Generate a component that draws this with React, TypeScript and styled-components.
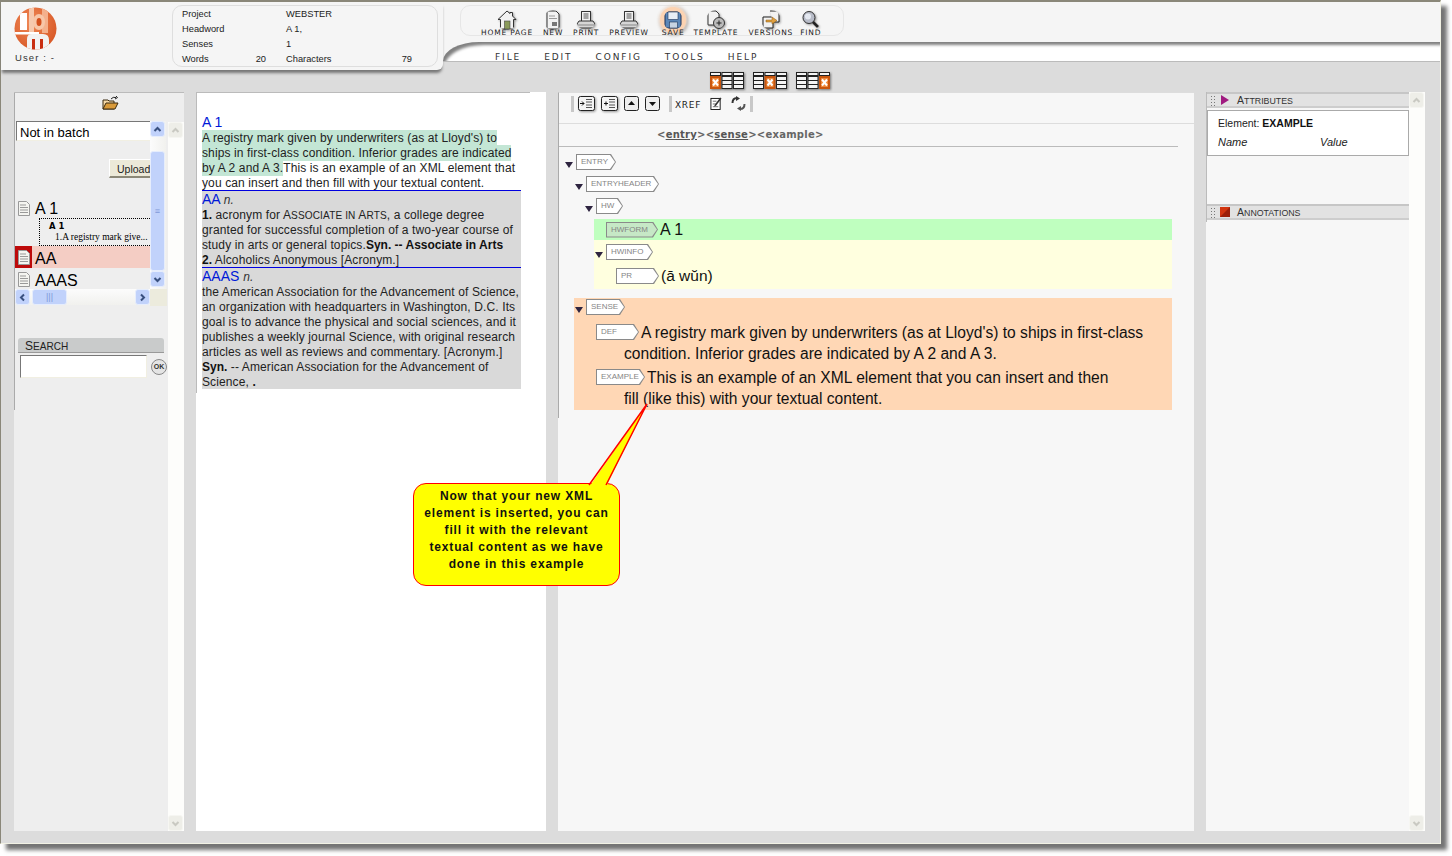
import React from 'react';
import styled, { createGlobalStyle } from 'styled-components';

const GlobalStyle = createGlobalStyle`
  html, body {
    margin: 0;
    height: 856px;
    overflow: hidden;
    background: #fff;
    font-family: "Liberation Sans", Arial, sans-serif;
    color: #000;
  }
  * { box-sizing: border-box; }
`;

const Window = styled.div`
  position: relative;
  width: 1441px;
  height: 844px;
  display: flex;
  flex-direction: column;
  background: #dcdcdc;
  border-top: 2px solid #8a8779;
  border-left: 1px solid #8a8779;
  border-right: 1px solid #f1f1e4;
  border-bottom: 1px solid #f1f1e4;
  box-shadow: 6px 6px 4px rgba(70, 70, 70, 0.75);
`;

const Header = styled.header`
  display: flex;
  height: 90px;
  flex: none;
`;

const HeaderLeft = styled.div`
  width: 442px;
  height: 68px;
  display: flex;
  background: #f5f5f5;
  border-bottom-right-radius: 6px;
  box-shadow: 0 4px 3px -1px #777;
  position: relative;
  z-index: 1;
`;

const Brand = styled.div`
  width: 171px;
  padding: 5px 0 0 13px;
  svg { display: block; }
`;

const UserLabel = styled.div`
  margin: 2px 0 0 1px;
  font-size: 9.5px;
  letter-spacing: 1.1px;
  color: #333;
`;

const InfoBox = styled.div`
  width: 266px;
  height: 62px;
  margin-top: 3px;
  padding: 0 0 0 9px;
  border: 1px solid #dedede;
  border-radius: 10px;
  display: grid;
  grid-template-columns: 60px 24px 20px 100px 26px;
  grid-auto-rows: 15px;
  align-items: center;
  font-size: 9.3px;
  color: #222;
`;

const InfoLabel = styled.span`
  grid-column: 1;
`;

const InfoValue = styled.span`
  grid-column: 4;
`;

const InfoNumber = styled.span`
  text-align: right;
`;

const HeaderRight = styled.div`
  flex: 1;
  display: flex;
  flex-direction: column;
  min-width: 0;
  background: linear-gradient(#f5f5f5 0, #f5f5f5 60px, #dcdcdc 60px);
`;

const ToolbarZone = styled.div`
  height: 40px;
  padding: 3px 0 0 17px;
`;

const ToolGroup = styled.div`
  width: 384px;
  height: 31px;
  padding: 4px 0 0 20px;
  display: flex;
  align-items: flex-start;
  gap: 10px;
  border: 1px solid #e6e6e6;
  border-radius: 10px;
`;

const ToolButton = styled.div<{ $glow?: boolean; $pull?: number }>`
  display: flex;
  flex-direction: column;
  align-items: center;
  margin: ${(p) => (p.$glow ? '0 -1px 0 3px' : `0 0 0 ${p.$pull || 0}px`)};
  svg {
    display: block;
    flex: none;
    width: 20px;
    height: 20px;
    margin-bottom: -1px;
    filter: drop-shadow(1px 1px 1px #999);
    border-radius: 50%;
    box-shadow: ${(p) => (p.$glow ? '0 0 0 3px #fcd3b2, 0 0 3px 4px #fde6d4' : 'none')};
    background: ${(p) => (p.$glow ? '#fcd3b2' : 'transparent')};
  }
`;

const ToolLabel = styled.span`
  position: relative;
  z-index: 1;
  font-family: "DejaVu Sans", sans-serif;
  font-size: 7.5px;
  letter-spacing: 0.8px;
  line-height: 8px;
  white-space: nowrap;
  color: #222;
`;

const MenuBar = styled.nav`
  height: 20px;
  padding: 11px 0 0 52px;
  display: flex;
  background: #fff;
  border-bottom: 1px solid #bbb;
  border-top-left-radius: 38px 20px;
  box-shadow: inset 3px 4px 3px -1px #808080;
  font-family: "DejaVu Sans", sans-serif;
  font-size: 9px;
  line-height: 9px;
  letter-spacing: 1.9px;
  color: #333;
  gap: 23px;
`;

const ViewSwitch = styled.div`
  padding: 10px 0 0 266px;
  display: flex;
  gap: 7px;
  svg {
    display: block;
    filter: drop-shadow(1px 1px 1px #777);
  }
`;

const Body = styled.main`
  flex: 1;
  min-height: 0;
  display: flex;
  gap: 12px;
  padding: 0 14px 12px 13px;
`;

const LeftPanel = styled.section`
  width: 170px;
  display: flex;
  background: #eee;
  border-top: 1px solid #bbb;
`;

const LeftMain = styled.div`
  width: 154px;
  height: 317px;
  border-left: 1px solid #aaa;
`;

const OuterScroll = styled.div<{ $top: number }>`
  width: 16px;
  margin-top: ${(p) => p.$top}px;
  display: flex;
  flex-direction: column;
  justify-content: space-between;
  background: #fdfdfb;
`;

const FolderRow = styled.div`
  height: 28px;
  padding: 3px 0 0 87px;
`;

const BatchBox = styled.div`
  width: 152px;
  display: grid;
  grid-template-columns: 135px 17px;
  grid-template-rows: 168px 17px;
`;

const BatchBody = styled.div`
  overflow: hidden;
`;

const BatchInput = styled.div`
  height: 20px;
  margin-left: 1px;
  padding: 3px 3px 0;
  background: #fff;
  border-top: 1px solid #777;
  border-left: 1px solid #777;
  border-bottom: 1px solid #f1efe2;
  font-size: 13px;
  line-height: 15px;
  white-space: nowrap;
`;

const UploadButton = styled.div`
  width: 41px;
  height: 19px;
  margin: 18px 0 20px 94px;
  padding: 3px 0 0 7px;
  background: #ece9d8;
  border-top: 1px solid #fff;
  border-left: 1px solid #fff;
  border-bottom: 2px solid #8b8877;
  font-size: 10.5px;
  line-height: 13px;
  color: #222;
`;

const Entry = styled.div<{ $active?: boolean; $height: number }>`
  height: ${(p) => p.$height}px;
  display: flex;
  align-items: center;
  background: ${(p) => (p.$active ? '#f4cdc4' : 'transparent')};
  font-size: 16px;
  white-space: nowrap;
`;

const EntryLabel = styled.span<{ $top?: number }>`
  padding-top: ${(p) => p.$top ?? 3}px;
`;

const EntryIcon = styled.span<{ $active?: boolean }>`
  width: 17px;
  height: 100%;
  margin-right: 3px;
  display: flex;
  align-items: center;
  justify-content: center;
  background: ${(p) => (p.$active ? '#bd0a0a' : 'transparent')};
`;

const EntryPreview = styled.div`
  height: 28px;
  margin-left: 24px;
  padding: 2px 0 0 9px;
  border-top: 1px dotted #000;
  border-left: 1px dotted #000;
  border-bottom: 1px dotted #000;
  white-space: nowrap;
  strong {
    display: block;
    font-family: "DejaVu Sans", sans-serif;
    font-size: 8.5px;
    line-height: 10px;
  }
  span {
    display: block;
    margin: 1px 0 0 6px;
    font-family: "Liberation Serif", serif;
    font-size: 9.5px;
    line-height: 11px;
  }
`;

const VScroll = styled.div`
  display: flex;
  flex-direction: column;
  width: 16px;
  background: linear-gradient(90deg, #fcfcfc, #f1f1ee);
`;

const HScroll = styled.div`
  display: flex;
  align-items: center;
  height: 16px;
  background: linear-gradient(#fcfcfc, #f1f1ee);
`;

const HScrollGap = styled.span`
  flex: 1;
`;

const Corner = styled.div`
  background: #ecebdd;
`;

const ScrollButton = styled.span<{ $pale?: boolean }>`
  flex: none;
  width: 15px;
  height: 16px;
  display: flex;
  align-items: center;
  justify-content: center;
  border: 1px solid ${(p) => (p.$pale ? '#f6f6f2' : '#e6edfc')};
  border-radius: 3px;
  background: ${(p) => (p.$pale ? '#eeeee8' : '#c1d2fb')};
  color: ${(p) => (p.$pale ? '#c9c9c2' : '#39507f')};
`;

const ScrollThumb = styled.span<{ $length: number; $flat?: boolean }>`
  flex: none;
  display: flex;
  align-items: center;
  justify-content: center;
  ${(p) =>
    p.$flat
      ? `width: ${p.$length}px; height: 16px; margin-left: 2px;`
      : `height: ${p.$length}px; width: 15px; margin-top: 14px;`}
  border: 1px solid #e6edfc;
  border-radius: 3px;
  background: #c1d2fb;
  color: #7f99d8;
  font-size: 9px;
`;

const Caps = styled.span`
  small {
    font-size: 0.84em;
  }
`;

const SearchHead = styled.div`
  width: 146px;
  height: 15px;
  margin: 32px 0 0 3px;
  padding: 1px 0 0 7px;
  background: #c9cbcb;
  border-bottom: 1px solid #999;
  border-radius: 3px 3px 0 0;
  font-size: 12px;
  line-height: 15px;
  color: #222;
`;

const SearchRow = styled.div`
  margin: 2px 0 0 5px;
  display: flex;
  align-items: center;
  gap: 4px;
`;

const SearchInput = styled.div`
  width: 127px;
  height: 23px;
  background: #fff;
  border-top: 1px solid #777;
  border-left: 1px solid #777;
  border-bottom: 1px solid #f1efe2;
  border-right: 1px solid #f1efe2;
`;

const OkButton = styled.span`
  width: 16px;
  height: 16px;
  display: flex;
  align-items: center;
  justify-content: center;
  border: 1px solid #888;
  border-radius: 50%;
  background: #e4e4e4;
  font-size: 7px;
  font-weight: bold;
  color: #333;
`;

const TextPanel = styled.section`
  width: 350px;
  background: #fff;
`;

const TextFrame = styled.div`
  width: 334px;
  height: 301px;
  padding: 22px 0 0 5px;
  border-top: 1px solid #bbb;
  border-left: 1px solid #bbb;
`;

const Article = styled.article<{ $shaded?: boolean; $ruled?: boolean; $height: number }>`
  width: 319px;
  height: ${(p) => p.$height}px;
  background: ${(p) => (p.$shaded ? '#d9d9d9' : 'transparent')};
  border-top: ${(p) => (p.$ruled ? '1px solid #0000e0' : 'none')};
  font-size: 12px;
  line-height: 15px;
  letter-spacing: 0.12px;
  white-space: nowrap;
  color: #222;
  mark {
    padding: 1px 0;
    background: #c3e6d5;
    color: inherit;
  }
  b {
    color: #111;
    letter-spacing: 0;
  }
`;

const Headword = styled.div<{ $large?: boolean }>`
  height: ${(p) => (p.$large ? 17 : 16)}px;
  font-size: 14px;
  line-height: ${(p) => (p.$large ? 16 : 15)}px;
  letter-spacing: 0;
  color: #0018d8;
  i {
    font-size: 12px;
    color: #333;
  }
`;

const EditorPanel = styled.section`
  width: 636px;
  background: #f7f7f7;
`;

const EditorFrame = styled.div`
  height: 326px;
  border-left: 1px solid #aaa;
  border-top: 1px solid #ddd;
`;

const EditorToolbar = styled.div`
  height: 31px;
  padding: 3px 0 0 12px;
  display: flex;
  align-items: flex-start;
  gap: 6px;
  border-bottom: 1px solid #ddd;
  svg {
    display: block;
    flex: none;
  }
`;

const ToolSeparator = styled.span<{ $left?: number; $right?: number }>`
  width: 3px;
  height: 16px;
  margin-left: ${(p) => p.$left || 0}px;
  margin-right: ${(p) => p.$right || 0}px;
  background: #c8c8c8;
`;

const XrefLabel = styled.span`
  margin: 4px 3px 0 0;
  font-family: "DejaVu Sans", sans-serif;
  font-size: 9px;
  letter-spacing: 0.7px;
  color: #222;
`;

const PathBar = styled.div`
  width: 619px;
  height: 23px;
  padding: 4px 0 0 98px;
  border-bottom: 1px solid #bbb;
  font-family: "DejaVu Sans", sans-serif;
  font-size: 10px;
  font-weight: bold;
  letter-spacing: 0.25px;
  line-height: 13px;
  color: #666;
  u { color: #555; }
`;

const Tree = styled.div`
  padding-top: 7px;
`;

const TreeRow = styled.div<{ $depth?: number; $height?: number; $gap?: number }>`
  display: flex;
  align-items: flex-end;
  gap: 3px;
  height: ${(p) => p.$height || 16}px;
  margin-bottom: ${(p) => p.$gap || 0}px;
  padding-left: ${(p) => p.$depth || 0}px;
`;

const Toggle = styled.span`
  width: 0;
  height: 0;
  margin-bottom: 2px;
  border-left: 4px solid transparent;
  border-right: 4px solid transparent;
  border-top: 6px solid #2e2440;
`;

const Tag = styled.span<{ $width: number; $muted?: boolean }>`
  position: relative;
  isolation: isolate;
  flex: none;
  display: inline-block;
  width: ${(p) => p.$width}px;
  height: 16px;
  padding: 2px 0 0 5px;
  margin-right: 2px;
  background: #8a8a8a;
  clip-path: polygon(0 0, calc(100% - 5px) 0, 100% 50%, calc(100% - 5px) 100%, 0 100%);
  text-indent: 0;
  vertical-align: 4px;
  font-size: 8px;
  line-height: 11px;
  letter-spacing: 0;
  color: #858585;
  &::before {
    content: '';
    position: absolute;
    inset: 1px;
    z-index: -1;
    background: ${(p) => (p.$muted ? '#c6e8c6' : '#fff')};
    clip-path: polygon(0 0, calc(100% - 5px) 0, 100% 50%, calc(100% - 5px) 100%, 0 100%);
  }
`;

const Band = styled.div<{ $color: string; $left: number; $height: number; $gap?: number }>`
  width: ${(p) => 613 - p.$left}px;
  height: ${(p) => p.$height}px;
  margin-left: ${(p) => p.$left}px;
  margin-bottom: ${(p) => p.$gap || 0}px;
  background: ${(p) => p.$color};
`;

const FormRow = styled.div`
  height: 100%;
  padding-left: 12px;
  display: flex;
  align-items: center;
  font-size: 16px;
  color: #111;
`;

const PronRow = styled.div`
  margin: 7px 0 0 22px;
  display: flex;
  align-items: center;
  font-size: 15.5px;
  line-height: 18px;
  color: #111;
`;

const SenseText = styled.p<{ $top: number }>`
  margin: ${(p) => p.$top}px 0 0 50px;
  text-indent: -28px;
  font-size: 15.6px;
  line-height: 21px;
  white-space: nowrap;
  color: #111;
`;

const RightPanel = styled.aside`
  width: 219px;
  display: flex;
  background: #f7f7f7;
`;

const RightMain = styled.div`
  width: 204px;
  height: 130px;
  border-left: 1px solid #bbb;
`;

const DockBar = styled.div<{ $top?: number }>`
  width: 202px;
  height: 16px;
  margin-top: ${(p) => p.$top || 0}px;
  padding-left: 3px;
  display: flex;
  align-items: center;
  gap: 4px;
  background: #e2e2e2;
  border-top: 2px solid #c6c6c6;
  border-bottom: 2px solid #cdcdcd;
  font-size: 10.5px;
  color: #333;
  svg { flex: none; }
`;

const DockTitle = styled.span`
  margin-left: 3px;
`;

const Grip = styled.span`
  width: 5px;
  height: 11px;
  margin-right: 1px;
  background-image: radial-gradient(#777 0.7px, transparent 0.8px);
  background-size: 3px 3px;
`;

const DockBody = styled.div`
  width: 202px;
  height: 46px;
  margin-top: 2px;
  padding: 5px 0 0 10px;
  background: #fff;
  border: 1px solid #aaa;
  font-size: 10.5px;
  line-height: 14px;
  color: #222;
  b { color: #111; }
`;

const AttrHead = styled.div`
  margin-top: 5px;
  display: grid;
  grid-template-columns: 102px 1fr;
  font-size: 11px;
  font-style: italic;
`;

const Callout = styled.div`
  position: absolute;
  left: 412px;
  top: 481px;
  width: 207px;
  height: 103px;
  padding-top: 4px;
  background: #ff0;
  border: 1.5px solid #f00;
  border-radius: 13px;
  text-align: center;
  font-size: 12px;
  font-weight: bold;
  line-height: 17px;
  letter-spacing: 0.85px;
  color: #111;
`;

const CalloutTail = styled.svg`
  position: absolute;
  left: 171px;
  top: -83px;
  display: block;
`;

const Chevron = ({ dir }: { dir: 'up' | 'down' | 'left' | 'right' }) => {
  const turn = { up: 0, right: 90, down: 180, left: 270 }[dir];
  return (
    <svg width="9" height="9" viewBox="0 0 9 9">
      <polyline
        points="1.5,6 4.5,3 7.5,6"
        fill="none"
        stroke="currentColor"
        strokeWidth="2"
        transform={`rotate(${turn} 4.5 4.5)`}
      />
    </svg>
  );
};

const Logo = () => (
  <svg width="43" height="43" viewBox="0 0 43 43">
    <defs>
      <radialGradient id="logoFill" cx="0.4" cy="0.35" r="0.8">
        <stop offset="0" stopColor="#f08a58" />
        <stop offset="1" stopColor="#d4501e" />
      </radialGradient>
      <clipPath id="logoClip">
        <circle cx="21.5" cy="21.5" r="21" />
      </clipPath>
    </defs>
    <circle cx="21.5" cy="21.5" r="21" fill="url(#logoFill)" />
    <g clipPath="url(#logoClip)">
      <rect x="6" y="6" width="7" height="17" fill="#fff" />
      <rect x="0" y="25" width="25" height="2.5" fill="#fff" />
      <rect x="15" y="0" width="5" height="25" fill="#f6c9ae" />
      <rect x="28" y="0" width="6" height="26" fill="#f4b08c" />
      <ellipse cx="25" cy="15" rx="6" ry="8" fill="#f7c6a8" />
      <ellipse cx="25" cy="15" rx="2.5" ry="4" fill="#d4501e" />
      <path d="M13 44V32q0-5 5-5h11q6 0 6 6v11z" fill="#f2f2f2" />
      <rect x="18" y="32" width="3" height="12" fill="#c92d10" />
      <rect x="26" y="32" width="3" height="12" fill="#c92d10" />
    </g>
  </svg>
);

const toolIcons: Record<string, React.ReactNode> = {
  home: (
    <>
      <path d="M10 1 1 9.5h2.5V19h13V9.5H19L15.5 6V2.5h-2.5V3.5z" fill="#f2f2f2" stroke="#333" />
      <rect x="7.5" y="11" width="5.5" height="8" fill="#8a9a5a" stroke="#444" strokeWidth="0.6" />
    </>
  ),
  new: (
    <>
      <path d="M4 1h9l3 3v15H4z" fill="#f2f2f2" stroke="#333" />
      <path d="M6 6h6M6 8.5h8" stroke="#999" />
      <rect x="9" y="12" width="5" height="4" fill="#777" />
    </>
  ),
  print: (
    <>
      <rect x="5.5" y="1.5" width="9" height="10" fill="#f2f2f2" stroke="#333" />
      <path d="M7.5 4h5M7.5 6h5M7.5 8h5" stroke="#555" />
      <path d="M3 11h14l2 3v4H1v-4z" fill="#d6d6d6" stroke="#333" />
      <path d="M2 15h16" stroke="#888" />
    </>
  ),
  save: (
    <>
      <path d="M2 2h16v16H4l-2-2z" fill="#5c87b8" stroke="#1c3358" />
      <rect x="5" y="2" width="10" height="7.5" fill="#e8eef6" stroke="#1c3358" strokeWidth="0.6" />
      <rect x="6.5" y="12" width="8" height="6" fill="#c7d3e2" stroke="#1c3358" strokeWidth="0.6" />
    </>
  ),
  template: (
    <>
      <path d="M2 1h8l3 3v11H2z" fill="#f2f2f2" stroke="#333" />
      <circle cx="13" cy="13" r="5.5" fill="#bbb" stroke="#333" />
      <path d="M10.5 13h5M13 10.5v5" stroke="#222" />
    </>
  ),
  versions: (
    <>
      <path d="M2 7h10v11H2z" fill="#f2f2f2" stroke="#222" />
      <path d="M9 1h9v11h-6" fill="#f2f2f2" stroke="#222" />
      <path d="M5 10h6V7l5 3.5-5 3.5v-2H5z" fill="#e0a040" stroke="#8a5a10" strokeWidth="0.5" />
    </>
  ),
  find: (
    <>
      <circle cx="8" cy="7.5" r="6" fill="#b8bcc8" stroke="#333" />
      <circle cx="7" cy="6.5" r="3" fill="#e4e8f0" />
      <path d="m12 12 6.5 6.5" stroke="#222" strokeWidth="2.6" />
    </>
  )
};

const tools = [
  { icon: 'home', label: 'HOME PAGE' },
  { icon: 'new', label: 'NEW' },
  { icon: 'print', label: 'PRINT' },
  { icon: 'print', label: 'PREVIEW' },
  { icon: 'save', label: 'SAVE', glow: true },
  { icon: 'template', label: 'TEMPLATE' },
  { icon: 'versions', label: 'VERSIONS' },
  { icon: 'find', label: 'FIND', pull: -3 }
];

const ViewIcon = ({ active }: { active: number }) => (
  <svg width="36" height="17" viewBox="0 0 36 17">
    {[0, 1, 2].map((col) => (
      <React.Fragment key={col}>
        <rect x={1 + col * 11.5} y="0" width="11" height="4" fill="#222" />
        <rect x={2 + col * 11.5} y="1" width="9" height="2" fill="#f4f4f4" />
        {col === active ? (
          <g>
            <rect x={1 + col * 11.5} y="4" width="11" height="13" fill="#c9560e" />
            <rect x={3 + col * 11.5} y="6" width="7" height="9" fill="#ef8a3c" />
            <path d={`M${4 + col * 11.5} 7.5l5 6m0-6l-5 6`} stroke="#fff" strokeWidth="2" />
          </g>
        ) : (
          <g>
            <rect x={1 + col * 11.5} y="4" width="11" height="13" fill="#222" />
            {[5, 9, 13].map((y) => (
              <rect key={y} x={2 + col * 11.5} y={y} width="9" height="3" fill="#f4f4f4" />
            ))}
          </g>
        )}
      </React.Fragment>
    ))}
  </svg>
);

const FolderIcon = () => (
  <svg width="17" height="14" viewBox="0 0 17 14">
    <path d="M1 4h5l1 1h5v8H1z" fill="#f5d9a8" stroke="#3a2a10" />
    <path d="M1 13 4 7h12l-3 6z" fill="#d99a3a" stroke="#3a2a10" />
    <path d="M9 3q2-2.5 5-1.5M14 0l1.5 1.6L13 3" fill="none" stroke="#222" />
  </svg>
);

const PageIcon = () => (
  <svg width="12" height="15" viewBox="0 0 12 15">
    <path d="M.5.5h8l3 3v11H.5z" fill="#f4f4f0" stroke="#999" />
    <path d="M2 4h6M2 6.5h8M2 9h8M2 11.5h8" stroke="#999" />
  </svg>
);

const IndentIcon = ({ flip }: { flip?: boolean }) => (
  <svg width="17" height="15" viewBox="0 0 17 15" style={{ filter: 'drop-shadow(1px 1px 1px #999)' }}>
    <rect x="0.5" y="0.5" width="16" height="14" rx="2" fill="#f4f4f4" stroke="#222" />
    <path d="M8 3.5h6M8 6h6M8 9h6M8 11.5h6" stroke="#555" />
    <path d={flip ? 'M3 7.5h4M5 5.5v4' : 'M2 7.5h4m-2-2 2 2-2 2'} stroke="#111" fill="none" />
  </svg>
);

const MoveIcon = ({ down }: { down?: boolean }) => (
  <svg width="15" height="15" viewBox="0 0 15 15">
    <rect x="0.5" y="0.5" width="14" height="14" rx="2" fill="#eee" stroke="#222" />
    <path d={down ? 'M4 6h7l-3.5 4z' : 'M4 9h7l-3.5-4z'} fill="#111" />
  </svg>
);

const App = () => (
  <>
    <GlobalStyle />
    <Window>
      <Header>
        <HeaderLeft>
          <Brand>
            <Logo />
            <UserLabel>User : -</UserLabel>
          </Brand>
          <InfoBox>
            <InfoLabel>Project</InfoLabel>
            <InfoValue>WEBSTER</InfoValue>
            <InfoLabel>Headword</InfoLabel>
            <InfoValue>A 1,</InfoValue>
            <InfoLabel>Senses</InfoLabel>
            <InfoValue>1</InfoValue>
            <InfoLabel>Words</InfoLabel>
            <InfoNumber>20</InfoNumber>
            <InfoValue>Characters</InfoValue>
            <InfoNumber>79</InfoNumber>
          </InfoBox>
        </HeaderLeft>
        <HeaderRight>
          <ToolbarZone>
            <ToolGroup>
              {tools.map((tool) => (
                <ToolButton key={tool.label} $glow={tool.glow} $pull={tool.pull}>
                  <svg viewBox="0 0 20 20">{toolIcons[tool.icon]}</svg>
                  <ToolLabel>{tool.label}</ToolLabel>
                </ToolButton>
              ))}
            </ToolGroup>
          </ToolbarZone>
          <MenuBar>
            <span>FILE</span>
            <span>EDIT</span>
            <span>CONFIG</span>
            <span>TOOLS</span>
            <span>HELP</span>
          </MenuBar>
          <ViewSwitch>
            <ViewIcon active={0} />
            <ViewIcon active={1} />
            <ViewIcon active={2} />
          </ViewSwitch>
        </HeaderRight>
      </Header>

      <Body>
        <LeftPanel>
          <LeftMain>
            <FolderRow>
              <FolderIcon />
            </FolderRow>
            <BatchBox>
              <BatchBody>
                <BatchInput>Not in batch</BatchInput>
                <UploadButton>Upload</UploadButton>
                <Entry $height={20}>
                  <EntryIcon>
                    <PageIcon />
                  </EntryIcon>
                  <EntryLabel $top={1}>A 1</EntryLabel>
                </Entry>
                <EntryPreview>
                  <strong>A 1</strong>
                  <span>1.A registry mark give...</span>
                </EntryPreview>
                <Entry $active $height={22}>
                  <EntryIcon $active>
                    <PageIcon />
                  </EntryIcon>
                  <EntryLabel>AA</EntryLabel>
                </Entry>
                <Entry $height={22}>
                  <EntryIcon>
                    <PageIcon />
                  </EntryIcon>
                  <EntryLabel>AAAS</EntryLabel>
                </Entry>
              </BatchBody>
              <VScroll>
                <ScrollButton>
                  <Chevron dir="up" />
                </ScrollButton>
                <ScrollThumb $length={120}>≡</ScrollThumb>
                <ScrollButton>
                  <Chevron dir="down" />
                </ScrollButton>
              </VScroll>
              <HScroll>
                <ScrollButton>
                  <Chevron dir="left" />
                </ScrollButton>
                <ScrollThumb $length={35} $flat>
                  |||
                </ScrollThumb>
                <HScrollGap />
                <ScrollButton>
                  <Chevron dir="right" />
                </ScrollButton>
              </HScroll>
              <Corner />
            </BatchBox>
            <SearchHead>
              <Caps>
                S<small>EARCH</small>
              </Caps>
            </SearchHead>
            <SearchRow>
              <SearchInput />
              <OkButton>OK</OkButton>
            </SearchRow>
          </LeftMain>
          <OuterScroll $top={29}>
            <ScrollButton $pale>
              <Chevron dir="up" />
            </ScrollButton>
            <ScrollButton $pale>
              <Chevron dir="down" />
            </ScrollButton>
          </OuterScroll>
        </LeftPanel>

        <TextPanel>
          <TextFrame>
            <Article $height={75}>
              <Headword>A 1</Headword>
              <mark>
                A registry mark given by underwriters (as at Lloyd's) to
                <br />
                ships in first-class condition. Inferior grades are indicated
                <br />
                by A 2 and A 3.
              </mark>
              This is an example of an XML element that
              <br />
              you can insert and then fill with your textual content.
            </Article>
            <Article $shaded $ruled $height={77}>
              <Headword $large>
                AA <i>n.</i>
              </Headword>
              <b>1.</b> acronym for{' '}
              <Caps>
                A<small>SSOCIATE IN</small> A<small>RTS</small>
              </Caps>
              , a college degree
              <br />
              granted for successful completion of a two-year course of
              <br />
              study in arts or general topics.<b>Syn. -- Associate in Arts</b>
              <br />
              <b>2.</b> Alcoholics Anonymous [Acronym.]
            </Article>
            <Article $shaded $ruled $height={122}>
              <Headword $large>
                AAAS <i>n.</i>
              </Headword>
              the American Association for the Advancement of Science,
              <br />
              an organization with headquarters in Washington, D.C. Its
              <br />
              goal is to advance the physical and social sciences, and it
              <br />
              publishes a weekly journal Science, with original research
              <br />
              articles as well as reviews and commentary. [Acronym.]
              <br />
              <b>Syn.</b> -- American Association for the Advancement of
              <br />
              Science, <b>.</b>
            </Article>
          </TextFrame>
        </TextPanel>

        <EditorPanel>
          <EditorFrame>
            <EditorToolbar>
              <ToolSeparator $right={-2} />
              <IndentIcon />
              <IndentIcon flip />
              <MoveIcon />
              <MoveIcon down />
              <ToolSeparator $left={3} $right={-3} />
              <XrefLabel>XREF</XrefLabel>
              <svg width="12" height="15" viewBox="0 0 13 15">
                <rect x="1" y="2" width="10" height="12" fill="#fff" stroke="#111" />
                <path d="M3 5h4M3 8h4M3 11h6" stroke="#666" />
                <path d="m5 9 6-8 1.5 1-6 8-2 1z" fill="#333" />
              </svg>
              <svg width="15" height="15" viewBox="0 0 15 15" style={{ marginLeft: 3 }}>
                <path d="M1.5 7Q1.5 2 6 2" fill="none" stroke="#333" strokeWidth="2" />
                <path d="M5 0l4 2.5L5 5z" fill="#333" />
                <path d="M13.5 8q0 5-4.5 5" fill="none" stroke="#555" strokeWidth="2" />
                <path d="M10 15l-4-2.5L10 10z" fill="#555" />
              </svg>
              <ToolSeparator $left={-2} />
            </EditorToolbar>
            <PathBar>
              &lt;<u>entry</u>&gt;&lt;<u>sense</u>&gt;&lt;example&gt;
            </PathBar>
            <Tree>
              <TreeRow $depth={6} $gap={6}>
                <Toggle />
                <Tag $width={40}>ENTRY</Tag>
              </TreeRow>
              <TreeRow $depth={16} $gap={6}>
                <Toggle />
                <Tag $width={73}>ENTRYHEADER</Tag>
              </TreeRow>
              <TreeRow $depth={26} $gap={5}>
                <Toggle />
                <Tag $width={27}>HW</Tag>
              </TreeRow>
              <Band $color="#bfffbf" $left={35} $height={21}>
                <FormRow>
                  <Tag $width={52} $muted>
                    HWFORM
                  </Tag>
                  A 1
                </FormRow>
              </Band>
              <Band $color="#ffffdf" $left={35} $height={49} $gap={9}>
                <TreeRow $depth={1} $height={20}>
                  <Toggle />
                  <Tag $width={47}>HWINFO</Tag>
                </TreeRow>
                <PronRow>
                  <Tag $width={43}>PR</Tag>
                  (ā wŭn)
                </PronRow>
              </Band>
              <Band $color="#ffd7b5" $left={15} $height={112}>
                <TreeRow $depth={1} $height={17}>
                  <Toggle />
                  <Tag $width={39}>SENSE</Tag>
                </TreeRow>
                <SenseText $top={7}>
                  <Tag $width={43}>DEF</Tag>A registry mark given by underwriters (as at Lloyd's)
                  to ships in first-class
                  <br />
                  condition. Inferior grades are indicated by A 2 and A 3.
                </SenseText>
                <SenseText $top={3}>
                  <Tag $width={49}>EXAMPLE</Tag>This is an example of an XML element that you can
                  insert and then
                  <br />
                  fill (like this) with your textual content.
                </SenseText>
              </Band>
            </Tree>
          </EditorFrame>
        </EditorPanel>

        <RightPanel>
          <RightMain>
            <DockBar>
              <Grip />
              <svg width="10" height="10" viewBox="0 0 10 10">
                <path d="M1 0v10l8-5z" fill="#a01a80" />
              </svg>
              <DockTitle>
                <Caps>
                  A<small>TTRIBUTES</small>
                </Caps>
              </DockTitle>
            </DockBar>
            <DockBody>
              Element: <b>EXAMPLE</b>
              <AttrHead>
                <span>Name</span>
                <span>Value</span>
              </AttrHead>
            </DockBody>
            <DockBar $top={48}>
              <Grip />
              <svg width="10" height="10" viewBox="0 0 10 10">
                <rect width="10" height="10" fill="#d2350f" />
                <path d="M0 10 10 0v10z" fill="#9c1f08" />
              </svg>
              <DockTitle>
                <Caps>
                  A<small>NNOTATIONS</small>
                </Caps>
              </DockTitle>
            </DockBar>
          </RightMain>
          <OuterScroll $top={0}>
            <ScrollButton $pale>
              <Chevron dir="up" />
            </ScrollButton>
            <ScrollButton $pale>
              <Chevron dir="down" />
            </ScrollButton>
          </OuterScroll>
        </RightPanel>
      </Body>

      <Callout>
        <CalloutTail width="70" height="88" viewBox="0 0 70 88">
          <polygon points="4,86 62,3 21,86" fill="#ff0" />
          <polyline points="4,84 62,3 21,84" fill="none" stroke="#f00" strokeWidth="1.5" />
        </CalloutTail>
        Now that your new XML
        <br />
        element is inserted, you can
        <br />
        fill it with the relevant
        <br />
        textual content as we have
        <br />
        done in this example
      </Callout>
    </Window>
  </>
);

export default App;
